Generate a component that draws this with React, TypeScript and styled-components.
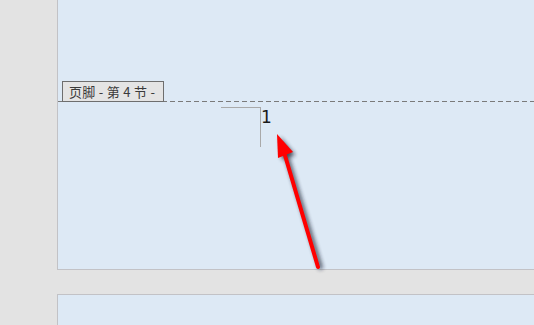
import React from "react";
import styled, { createGlobalStyle } from "styled-components";

const Global = createGlobalStyle`
  html, body { margin: 0; padding: 0; background: #e3e3e3; overflow: hidden; }
  body { width: 534px; height: 325px; font-family: "Noto Sans CJK SC", "DejaVu Sans", sans-serif; }
`;

const Canvas = styled.div`
  position: relative;
  width: 534px;
  height: 325px;
  display: flex;
  flex-direction: column;
  gap: 24px;
  padding-left: 57px;
  box-sizing: border-box;
  overflow: hidden;
`;

const Page = styled.div<{ $first?: boolean }>`
  flex: none;
  background: #dde9f5;
  border-left: 1px solid #c2c2c6;
  ${(p) => (p.$first ? "border-bottom: 1px solid #c2c2c6; height: 270px;" : "border-top: 1px solid #c2c2c6; height: 40px;")}
  box-sizing: border-box;
  display: flex;
  flex-direction: column;
`;

const Body = styled.div`
  height: 101px;
  flex: none;
`;

const Footer = styled.div`
  position: relative;
  flex: 1;
  background-image: linear-gradient(to right, #7a7a7a 0 5px, transparent 5px 8px);
  background-size: 8px 1px;
  background-repeat: repeat-x;
  background-position: 0 0;
  padding-top: 6px;
  padding-left: 163px;
  display: flex;
  align-items: flex-start;
`;

const Tag = styled.div`
  position: absolute;
  left: 4px;
  top: -20px;
  width: 102px;
  height: 21px;
  box-sizing: border-box;
  border: 1px solid #6e6e6e;
  background: #e4e4e4;
  color: #3a3a3a;
  font-size: 13px;
  line-height: 19px;
  padding-left: 6px;
  letter-spacing: 0.3px;
  white-space: pre;
  font-family: "Noto Sans CJK SC", "DejaVu Sans", sans-serif;
`;

const Corner = styled.div`
  width: 39px;
  height: 39px;
  border-top: 1px solid #a9a9a9;
  border-right: 1px solid #a9a9a9;
  flex: none;
`;

const PageNum = styled.span`
  font-family: "DejaVu Sans", sans-serif;
  font-size: 17px;
  line-height: 17px;
  color: #1a1a1a;
  margin-left: 0px;
  margin-top: 2px;
`;

const Overlay = styled.svg`
  position: absolute;
  left: 0;
  top: 0;
  pointer-events: none;
`;

export default function App() {
  return (
    <>
      <Global />
      <Canvas>
        <Page $first>
          <Body />
          <Footer>
            <Tag>{"页脚 - 第 4 节 -"}</Tag>
            <Corner />
            <PageNum>1</PageNum>
          </Footer>
        </Page>
        <Page />
        <Overlay width="534" height="325" viewBox="0 0 534 325">
          <defs>
            <filter id="sh" x="-50%" y="-20%" width="200%" height="140%">
              <feGaussianBlur stdDeviation="2" />
            </filter>
          </defs>
          <g filter="url(#sh)" opacity="0.8" transform="translate(3,2)">
            <line x1="318" y1="267" x2="284" y2="155" stroke="#1c2430" strokeWidth="4" />
            <polygon points="277,135 292,153 279,158" fill="#1c2430" />
          </g>
          <line x1="318" y1="267" x2="284" y2="152" stroke="#ff0000" strokeWidth="4" strokeLinecap="round" />
          <polygon points="277,134 293,152 278,158" fill="#ff0000" />
        </Overlay>
      </Canvas>
    </>
  );
}
